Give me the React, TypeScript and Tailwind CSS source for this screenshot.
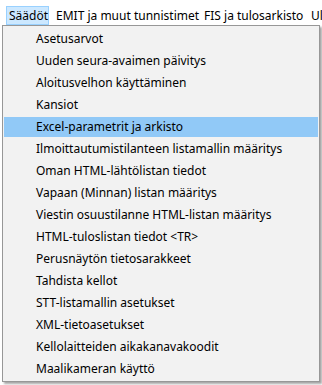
import React from 'react';

const MENU_BAR = [
  { label: 'EMIT ja muut tunnistimet', width: 'w-[148px]' },
  { label: 'FIS ja tulosarkisto', width: 'w-[107px]' },
  { label: 'Ulkoasu', width: 'w-[60px]' },
];

const ITEMS = [
  'Asetusarvot',
  'Uuden seura-avaimen päivitys',
  'Aloitusvelhon käyttäminen',
  'Kansiot',
  'Excel-parametrit ja arkisto',
  'Ilmoittautumistilanteen listamallin määritys',
  'Oman HTML-lähtölistan tiedot',
  'Vapaan (Minnan) listan määritys',
  'Viestin osuustilanne HTML-listan määritys',
  'HTML-tuloslistan tiedot <TR>',
  'Perusnäytön tietosarakkeet',
  'Tahdista kellot',
  'STT-listamallin asetukset',
  'XML-tietoasetukset',
  'Kellolaitteiden aikakanavakoodit',
  'Maalikameran käyttö',
];

// Korostettu rivi (hiiri päällä)
const ACTIVE = 4;

export default function App() {
  return (
    <div className="relative w-[322px] h-[385px] overflow-hidden bg-white text-[12px] text-black font-['Segoe_UI','Noto_Sans',sans-serif]">
      {/* Valikkorivi */}
      <div className="flex items-center pt-[6px] h-[25px] whitespace-nowrap">
        <div className="ml-[6px] w-[45px] h-[19px] flex items-center pl-[2px] border border-[#99d1ff] bg-[#cce8ff]">
          Säädöt
        </div>
        <div className="ml-[7px] flex">
          {MENU_BAR.map((m) => (
            <div key={m.label} className={`${m.width} h-[19px] flex items-center shrink-0`}>
              {m.label}
            </div>
          ))}
        </div>
      </div>

      {/* Avattu alasvetovalikko */}
      <div className="absolute left-[2px] top-[25px] w-[318px] border border-[#979797] bg-[#f2f2f2] pt-[2px] pb-[1px] shadow-[2px_2px_2px_rgba(0,0,0,0.35)]">
        {ITEMS.map((item, i) => (
          <div key={item} className="h-[22px] px-[1px] py-[1px]">
            <div
              className={`h-[20px] flex items-center pl-[32px] whitespace-nowrap ${
                i === ACTIVE ? 'bg-[#91c9f7]' : ''
              }`}
            >
              {item}
            </div>
          </div>
        ))}
      </div>
    </div>
  );
}
